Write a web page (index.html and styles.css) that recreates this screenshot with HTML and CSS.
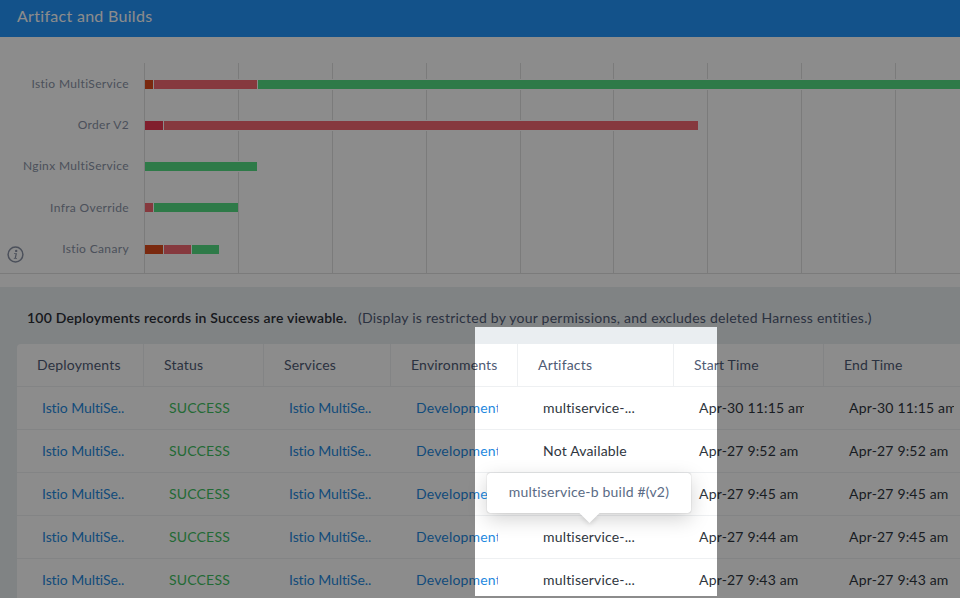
FILE: index.html
```html
<!DOCTYPE html>
<html lang="en">
<head>
<meta charset="utf-8">
<title>Artifact and Builds</title>
<link rel="stylesheet" href="styles.css">
</head>
<body>
<div class="page">
  <header class="topbar">Artifact and Builds</header>
  <section class="chart">
    <div class="chart-labels">
      <div class="chart-label">Istio MultiService</div>
      <div class="chart-label">Order V2</div>
      <div class="chart-label">Nginx MultiService</div>
      <div class="chart-label">Infra Override</div>
      <div class="chart-label">Istio Canary</div>
    </div>
    <div class="plot">
      <div class="plot-row"><div class="bar"><span class="seg orange" style="width:8px"></span><span class="seg red" style="width:103px"></span><span class="seg green" style="width:702px"></span></div></div>
      <div class="plot-row"><div class="bar"><span class="seg crimson" style="width:18px"></span><span class="seg red" style="width:534px"></span></div></div>
      <div class="plot-row"><div class="bar"><span class="seg green" style="width:112px"></span></div></div>
      <div class="plot-row"><div class="bar"><span class="seg red" style="width:8px"></span><span class="seg green" style="width:84px"></span></div></div>
      <div class="plot-row"><div class="bar"><span class="seg orange" style="width:18px"></span><span class="seg red" style="width:27px"></span><span class="seg green" style="width:27px"></span></div></div>
    </div>
    <svg class="info-icon" width="17" height="17" viewBox="0 0 17 17" aria-hidden="true">
      <circle cx="8.5" cy="8.5" r="7.4" fill="none" stroke="#8a93a6" stroke-width="1.5"/>
      <circle cx="9.2" cy="4.9" r="1.2" fill="#8a93a6"/>
      <path d="M7 7.2h3l-1 4.500c-.1.4.3.5 1 .2v.8H6.800v-.6c.7 0 .9-.1 1-.5l.7-3.300c0-.3-.3-.4-1.500-.3z" fill="#8a93a6"/>
    </svg>
  </section>
  <section class="records">
    <p class="notice"><strong class="notice-count">100 Deployments records in Success are viewable.</strong><span class="notice-note">(Display is restricted by your permissions, and excludes deleted Harness entities.)</span></p>
    <div class="table">
      <div class="row head">
        <div class="cell">Deployments</div><div class="cell">Status</div><div class="cell">Services</div><div class="cell">Environments</div><div class="cell">Artifacts</div><div class="cell">Start Time</div><div class="cell">End Time</div>
      </div>
      <div class="row">
        <div class="cell link name">Istio MultiSe..</div><div class="cell ok">SUCCESS</div><div class="cell link name">Istio MultiSe..</div><div class="cell link">Development</div><div class="cell">multiservice-...</div><div class="cell">Apr-30 11:15 am</div><div class="cell">Apr-30 11:15 am</div>
      </div>
      <div class="row">
        <div class="cell link name">Istio MultiSe..</div><div class="cell ok">SUCCESS</div><div class="cell link name">Istio MultiSe..</div><div class="cell link">Development</div><div class="cell">Not Available</div><div class="cell">Apr-27 9:52 am</div><div class="cell">Apr-27 9:52 am</div>
      </div>
      <div class="row">
        <div class="cell link name">Istio MultiSe..</div><div class="cell ok">SUCCESS</div><div class="cell link name">Istio MultiSe..</div><div class="cell link">Development</div><div class="cell"></div><div class="cell">Apr-27 9:45 am</div><div class="cell">Apr-27 9:45 am</div>
      </div>
      <div class="row">
        <div class="cell link name">Istio MultiSe..</div><div class="cell ok">SUCCESS</div><div class="cell link name">Istio MultiSe..</div><div class="cell link">Development</div><div class="cell">multiservice-...</div><div class="cell">Apr-27 9:44 am</div><div class="cell">Apr-27 9:45 am</div>
      </div>
      <div class="row">
        <div class="cell link name">Istio MultiSe..</div><div class="cell ok">SUCCESS</div><div class="cell link name">Istio MultiSe..</div><div class="cell link">Development</div><div class="cell">multiservice-...</div><div class="cell">Apr-27 9:43 am</div><div class="cell">Apr-27 9:43 am</div>
      </div>
    </div>
  </section>
  <div class="spotlight"></div>
  <div class="tooltip">multiservice-b build #(v2)</div>
</div>
</body>
</html>
```
FILE: styles.css
```css
* { box-sizing: border-box; }
html, body { margin: 0; padding: 0; }
body { font-family: "Lato", "Open Sans", sans-serif; background: #eaeef1; }
.page { position: relative; width: 960px; height: 598px; overflow: hidden; }

.topbar {
  height: 37px;
  background: #2495fb;
  color: #fff;
  font-size: 16px;
  line-height: 31px;
  padding-left: 17px;
  letter-spacing: .3px;
}

.chart {
  position: relative;
  display: flex;
  height: 250px;
  padding-top: 26px;
  background: #fff;
}
.chart::after {
  content: "";
  position: absolute;
  left: 0; right: 0; top: 236px;
  height: 1px;
  background: #e1e1e1;
}
.chart-labels { width: 144px; flex: none; padding-right: 15px; }
.chart-label {
  height: 41px;
  line-height: 41px;
  text-align: right;
  font-size: 12px;
  letter-spacing: .35px;
  color: #8a93a6;
  white-space: nowrap;
}
.chart-label:nth-child(4) { margin-top: 1px; }
.plot {
  flex: 1;
  min-width: 0;
  height: 210px;
  padding: 1px 0 0 1px;
  background: repeating-linear-gradient(90deg, #e1e1e1 0 1px, transparent 1px 93.875px);
}
.plot-row { height: 41px; display: flex; align-items: center; }
.plot-row:last-child { padding-top: 2px; }
.bar {
  display: flex;
  gap: 1px;
  background: #fff;
  box-shadow: 0 -1px 0 #fff, 0 1px 0 #fff;
}
.seg { display: block; height: 9px; flex: none; }
.orange { background: #de4c1d; }
.crimson { background: #ec3a52; }
.red { background: #f56971; }
.green { background: #55de83; }
.info-icon { position: absolute; left: 7px; top: 209px; }

.records { padding-top: 22px; }
.notice {
  margin: 0 0 17px 27px;
  font-size: 14px;
  line-height: 18px;
  white-space: nowrap;
  letter-spacing: .2px;
}
.notice-count { font-weight: 600; color: #2b2f36; }
.notice-note { margin-left: 11px; color: #4f5b75; letter-spacing: .24px; }

.table {
  width: 960px;
  margin-left: 17px;
  background: #fff;
  border-radius: 4px 0 0 0;
}
.row {
  display: grid;
  grid-template-columns: 127px 120px 127px 127px 156px 150px 150px;
  height: 43px;
  border-bottom: 1px solid #eef0f2;
  font-size: 14px;
  line-height: 42px;
  color: #2f3640;
  letter-spacing: .18px;
}
.cell { margin-right: 20px; padding-left: 25px; overflow: hidden; white-space: nowrap; }
.head { color: #4f5b75; line-height: 41px; }
.head .cell { margin-right: 0; padding-left: 20px; border-right: 1px solid #eef0f2; }
.link { color: #1f8ae0; }
.name { letter-spacing: -.08px; }
.ok { color: #3fc262; }

.spotlight {
  position: absolute;
  left: 475px;
  top: 327px;
  width: 242px;
  height: 269px;
  box-shadow: 0 0 0 1000px rgba(0, 0, 0, .45);
}
.tooltip {
  position: absolute;
  left: 487px;
  top: 473px;
  width: 204px;
  height: 40px;
  background: #fff;
  border-radius: 3px;
  box-shadow: 0 0 1px rgba(0,0,0,.4), 0 6px 20px rgba(0,0,0,.18);
  color: #5a6b85;
  font-size: 14px;
  line-height: 38px;
  text-align: center;
  letter-spacing: .2px;
}
.tooltip::after {
  content: "";
  position: absolute;
  left: 94.5px;
  top: 32px;
  width: 15px;
  height: 15px;
  background: #fff;
  transform: rotate(45deg);
  box-shadow: 3px 3px 5px -2px rgba(0,0,0,.15);
}
```
